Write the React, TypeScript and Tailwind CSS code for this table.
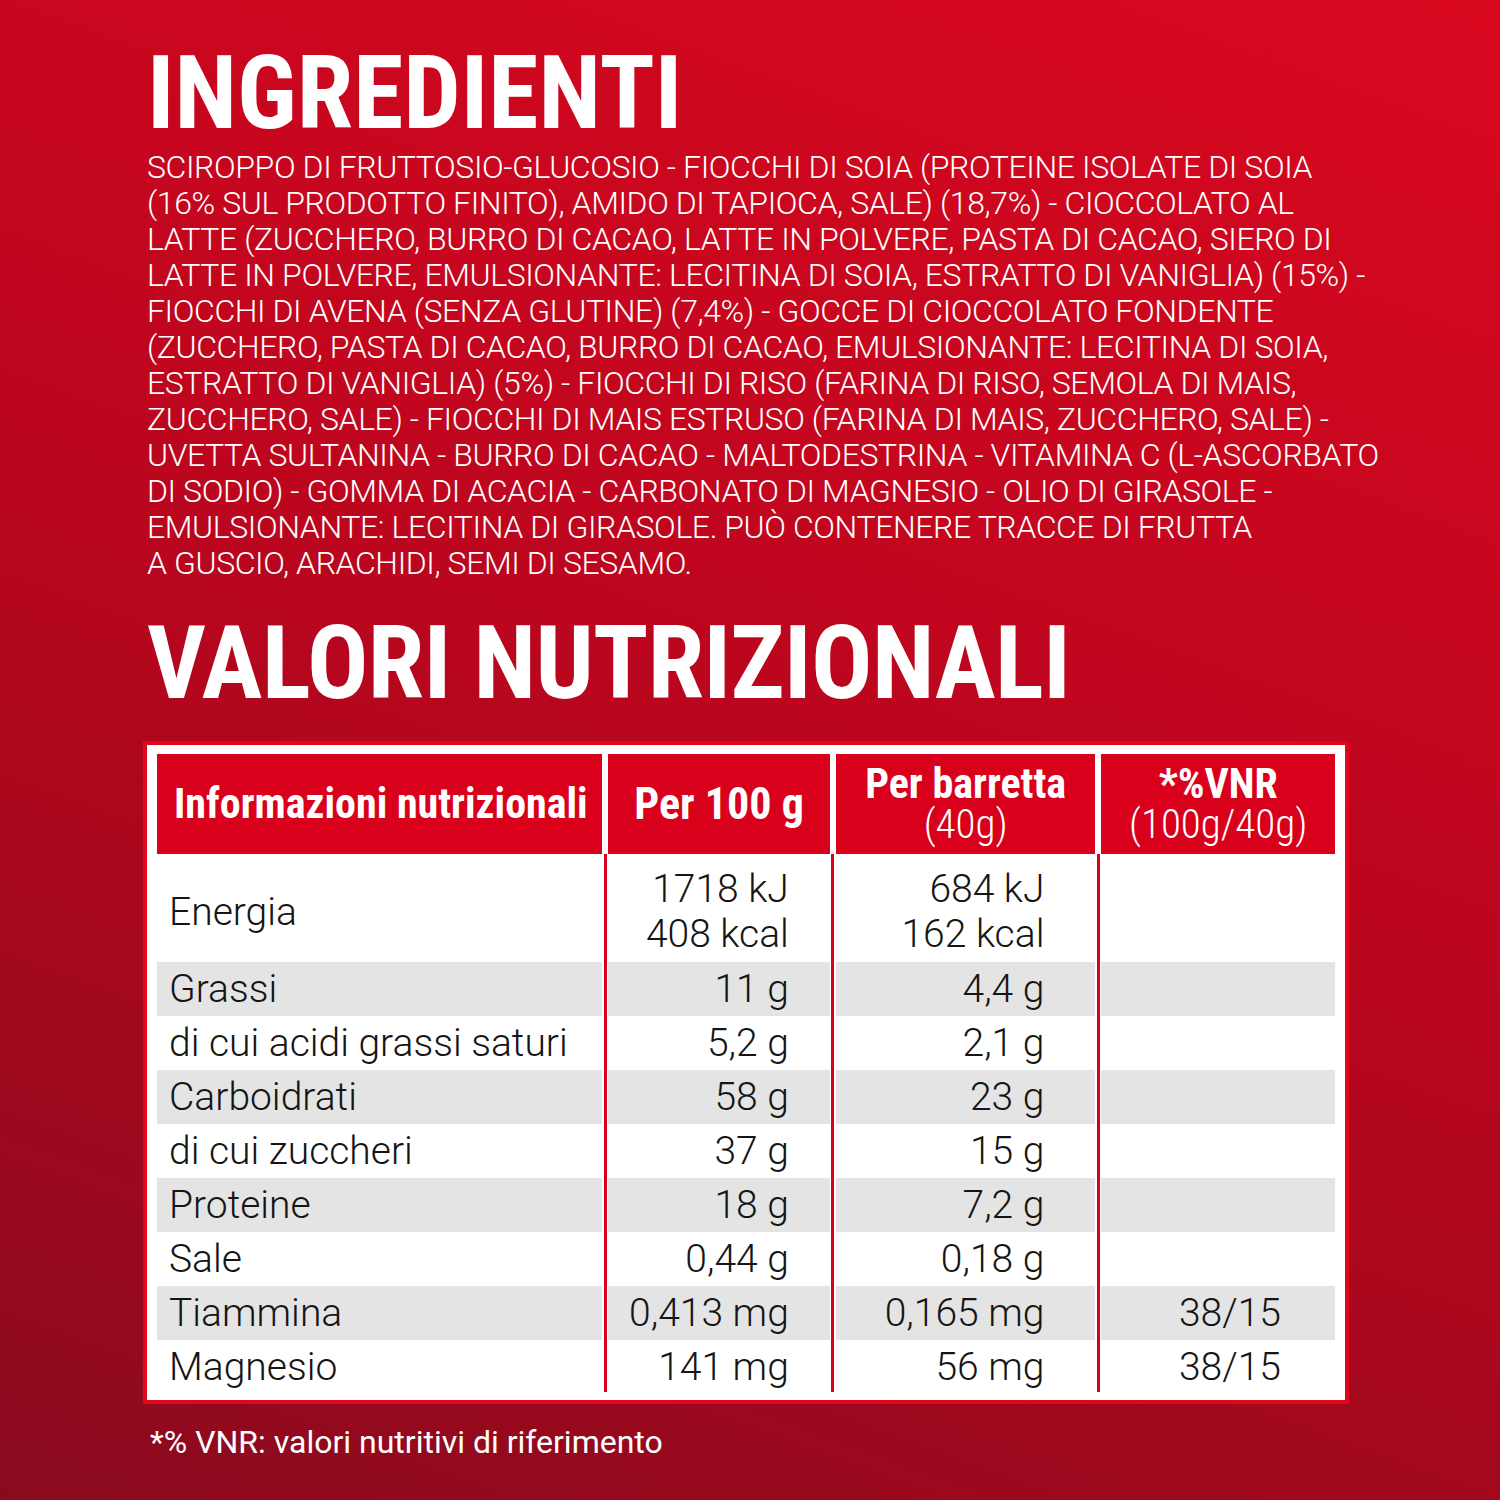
const ingredientLines = [
  'SCIROPPO DI FRUTTOSIO-GLUCOSIO - FIOCCHI DI SOIA (PROTEINE ISOLATE DI SOIA',
  '(16% SUL PRODOTTO FINITO), AMIDO DI TAPIOCA, SALE) (18,7%) - CIOCCOLATO AL',
  'LATTE (ZUCCHERO, BURRO DI CACAO, LATTE IN POLVERE, PASTA DI CACAO, SIERO DI',
  'LATTE IN POLVERE, EMULSIONANTE: LECITINA DI SOIA, ESTRATTO DI VANIGLIA) (15%) -',
  'FIOCCHI DI AVENA (SENZA GLUTINE) (7,4%) - GOCCE DI CIOCCOLATO FONDENTE',
  '(ZUCCHERO, PASTA DI CACAO, BURRO DI CACAO, EMULSIONANTE: LECITINA DI SOIA,',
  'ESTRATTO DI VANIGLIA) (5%) - FIOCCHI DI RISO (FARINA DI RISO, SEMOLA DI MAIS,',
  'ZUCCHERO, SALE) - FIOCCHI DI MAIS ESTRUSO (FARINA DI MAIS, ZUCCHERO, SALE) -',
  'UVETTA SULTANINA - BURRO DI CACAO - MALTODESTRINA - VITAMINA C (L-ASCORBATO',
  'DI SODIO) - GOMMA DI ACACIA - CARBONATO DI MAGNESIO - OLIO DI GIRASOLE -',
  'EMULSIONANTE: LECITINA DI GIRASOLE. PUÒ CONTENERE TRACCE DI FRUTTA',
  'A GUSCIO, ARACHIDI, SEMI DI SESAMO.',
];

interface Row {
  label: string;
  per100: string[];
  perBar: string[];
  vnr: string;
}

const rows: Row[] = [
  { label: 'Energia', per100: ['1718 kJ', '408 kcal'], perBar: ['684 kJ', '162 kcal'], vnr: '' },
  { label: 'Grassi', per100: ['11 g'], perBar: ['4,4 g'], vnr: '' },
  { label: 'di cui acidi grassi saturi', per100: ['5,2 g'], perBar: ['2,1 g'], vnr: '' },
  { label: 'Carboidrati', per100: ['58 g'], perBar: ['23 g'], vnr: '' },
  { label: 'di cui zuccheri', per100: ['37 g'], perBar: ['15 g'], vnr: '' },
  { label: 'Proteine', per100: ['18 g'], perBar: ['7,2 g'], vnr: '' },
  { label: 'Sale', per100: ['0,44 g'], perBar: ['0,18 g'], vnr: '' },
  { label: 'Tiammina', per100: ['0,413 mg'], perBar: ['0,165 mg'], vnr: '38/15' },
  { label: 'Magnesio', per100: ['141 mg'], perBar: ['56 mg'], vnr: '38/15' },
];

// energia row is double height, grey on odd rows
const rowClass = (i: number) =>
  (i === 0 ? 'h-[108px] pt-[8px] ' : 'h-[54px] ') + (i % 2 === 1 ? 'bg-[#e4e4e4]' : 'bg-white');

function Separator() {
  return (
    <div className="w-[6px] flex flex-col">
      <div className="h-[100px]" />
      <div className="flex-1 flex justify-center pb-[2px]">
        <div className="w-[3px] bg-[#d8001c]" />
      </div>
    </div>
  );
}

function Header({ children, className }: { children: React.ReactNode; className?: string }) {
  return (
    <div className={'h-[100px] bg-[#d9001c] text-white flex flex-col justify-center whitespace-nowrap font-stretch-[85%] ' + (className ?? '')}>
      {children}
    </div>
  );
}

function ValueCell({ lines, i, pr }: { lines: string[]; i: number; pr: string }) {
  return (
    <div className={rowClass(i) + ' flex flex-col justify-center items-end ' + pr}>
      {lines.map((l) => (
        <div key={l} className="leading-[45px]">{l}</div>
      ))}
    </div>
  );
}

export default function App() {
  return (
    <div className="w-[1500px] h-[1500px] overflow-hidden bg-[linear-gradient(200deg,#d9081f_0%,#bd061e_45%,#8a0a1d_100%)] font-['Roboto',sans-serif] text-white pl-[147px]">
      <h1 className="pt-[42px] text-[102px] leading-none font-bold font-stretch-[80%]">INGREDIENTI</h1>

      <div className="mt-[5px] text-[32px] leading-[36px] font-light tracking-[-0.4px]">
        {ingredientLines.map((l) => (
          <div key={l} className="whitespace-nowrap">{l}</div>
        ))}
      </div>

      <h2 className="mt-[31px] text-[102px] leading-none font-bold font-stretch-[80%] tracking-[-0.6px]">VALORI NUTRIZIONALI</h2>

      <div className="mt-[27px] ml-[-4px] w-[1206px] border-4 border-[#e2061c] bg-white pt-[9px] px-[10px] pb-[6px] flex text-[#151515] text-[39px] font-light">
        <div className="w-[446px] flex flex-col">
          <Header className="pl-[17px]">
            <span className="text-[42px] font-bold leading-none">Informazioni nutrizionali</span>
          </Header>
          {rows.map((r, i) => (
            <div key={r.label} className={rowClass(i) + ' flex items-center pl-[12px]'}>
              {r.label}
            </div>
          ))}
        </div>
        <Separator />
        <div className="w-[222px] flex flex-col">
          <Header className="items-center">
            <span className="text-[44px] font-bold leading-none">Per 100 g</span>
          </Header>
          {rows.map((r, i) => (
            <ValueCell key={r.label} lines={r.per100} i={i} pr="pr-[41px]" />
          ))}
        </div>
        <Separator />
        <div className="w-[260px] flex flex-col">
          <Header className="items-center">
            <span className="text-[42px] font-bold leading-[40px]">Per barretta</span>
            <span className="text-[41px] font-light leading-[40px]">(40g)</span>
          </Header>
          {rows.map((r, i) => (
            <ValueCell key={r.label} lines={r.perBar} i={i} pr="pr-[51px]" />
          ))}
        </div>
        <Separator />
        <div className="w-[234px] flex flex-col">
          <Header className="items-center">
            <span className="text-[42px] font-bold leading-[40px]">*%VNR</span>
            <span className="text-[41px] font-light leading-[40px]">(100g/40g)</span>
          </Header>
          {rows.map((r, i) => (
            <ValueCell key={r.label} lines={r.vnr ? [r.vnr] : []} i={i} pr="pr-[54px]" />
          ))}
        </div>
      </div>

      <p className="mt-[20px] ml-[3px] text-[32px] leading-[36px]">
        *% VNR: valori nutritivi di riferimento
      </p>
    </div>
  );
}
